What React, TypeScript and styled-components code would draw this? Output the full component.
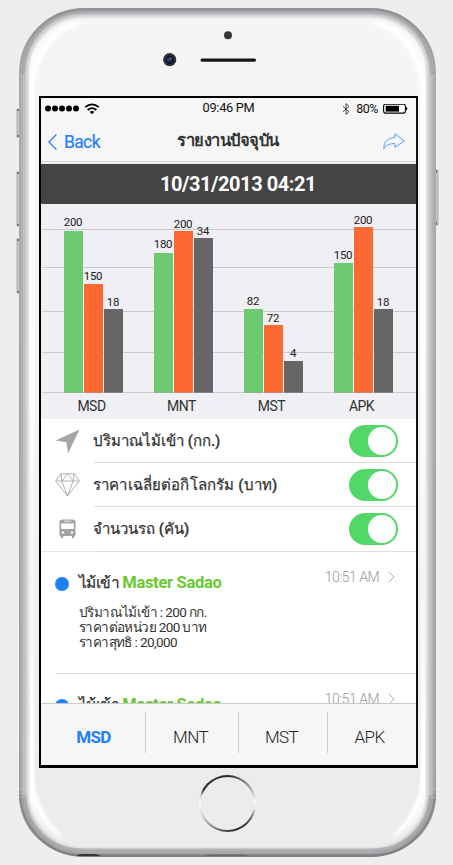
import React from "react";
import styled, { createGlobalStyle } from "styled-components";

const GlobalStyle = createGlobalStyle`
  * { box-sizing: border-box; }
  body { margin: 0; background: #eeeeee; font-family: Roboto, "Noto Sans", sans-serif; color: #333; }
`;

const Stage = styled.main`
  width: 453px;
  height: 865px;
  padding: 8px 17px 8px 19px;
  background: #eeeeee;
  overflow: hidden;
`;

const Phone = styled.div`
  position: relative;
  width: 417px;
  height: 849px;
  border-radius: 65px;
  background: linear-gradient(#f5f5f5 0%, #f5f5f5 35%, #eaedec 88%, #eaedec 100%);
  display: flex;
  flex-direction: column;
  align-items: center;
`;

const Shell = styled.svg`
  position: absolute;
  left: -3px;
  top: 0;
`;

const Earpiece = styled.header`
  position: relative;
  height: 88px;
  width: 100%;
`;

const Screen = styled.section`
  position: relative;
  width: 379px;
  height: 672px;
  margin-left: 3px;
  margin-right: 1px;
  border: solid #000;
  border-width: 2px 2px 3px 2px;
  border-right-color: #111;
  background: #fff;
  display: flex;
  flex-direction: column;
  overflow: hidden;
`;

const StatusBar = styled.div`
  height: 21px;
  flex: none;
  padding: 0 8px 0 4px;
  display: grid;
  grid-template-columns: 1fr auto 1fr;
  align-items: center;
  background: #f6f6f6;
  color: #111;
  font-size: 12px;
  line-height: 21px;
`;

const Cluster = styled.div<{ $end?: boolean }>`
  display: flex;
  align-items: center;
  justify-content: ${(p) => (p.$end ? "flex-end" : "flex-start")};
`;

const Clock = styled.time`
  margin: -3px 0 0 4px;
  font-size: 12.8px;
  letter-spacing: -0.3px;
`;

const Percent = styled.span`
  margin: 0 5px 0 6px;
  font-size: 12.5px;
  letter-spacing: -0.5px;
`;

const NavBar = styled.nav`
  height: 43px;
  flex: none;
  padding: 0 11px 0 7px;
  display: grid;
  grid-template-columns: 1fr auto 1fr;
  align-items: center;
  background: #f6f6f6;
  border-bottom: 1px solid #d5d5da;
`;

const BackButton = styled.button`
  display: flex;
  align-items: center;
  gap: 7px;
  padding: 4px 0 0;
  border: 0;
  background: none;
  color: #2581f8;
  font: 400 17.5px/22px Roboto, sans-serif;
  letter-spacing: -0.65px;
  -webkit-text-stroke: 0.2px currentColor;
`;

const Title = styled.h1`
  margin: 2px 0 0 3px;
  font-size: 16.5px;
  line-height: 24px;
  font-weight: 700;
  letter-spacing: -0.45px;
`;

const ShareButton = styled.button`
  justify-self: end;
  padding: 2px 0 0;
  border: 0;
  background: none;
  line-height: 0;
`;

const DateBanner = styled.div`
  height: 42px;
  flex: none;
  border-top: 2px solid #efeff4;
  background: #444;
  color: #fff;
  text-align: center;
  font-size: 20px;
  line-height: 41px;
  font-weight: 700;
  letter-spacing: -0.45px;
  padding-left: 19px;
`;

const Chart = styled.figure`
  margin: 0;
  height: 215px;
  flex: none;
  background:
    linear-gradient(#cbcbcf, #cbcbcf) 0 25px / 100% 1px no-repeat,
    linear-gradient(#cbcbcf, #cbcbcf) 0 63px / 100% 1px no-repeat,
    linear-gradient(#cbcbcf, #cbcbcf) 0 107px / 100% 1px no-repeat,
    linear-gradient(#cbcbcf, #cbcbcf) 0 148px / 100% 1px no-repeat,
    linear-gradient(#cbcbcf, #cbcbcf) 0 188px / 100% 1px no-repeat,
    #efeff4;
  padding-left: 23px;
  display: flex;
  gap: 31px;
`;

const Group = styled.div`
  width: 59px;
  flex: none;
`;

const Bars = styled.div`
  height: 189px;
  display: flex;
  align-items: flex-end;
  gap: 1px;
`;

const Column = styled.div`
  width: 19px;
  display: flex;
  flex-direction: column;
  align-items: center;
`;

const Value = styled.span<{ $lift: number }>`
  font-size: 11.5px;
  line-height: 13px;
  letter-spacing: -0.25px;
  color: #222;
  white-space: nowrap;
  padding-right: 1px;
  margin-bottom: ${(p) => p.$lift}px;
`;

const Bar = styled.div<{ $h: number; $color: string }>`
  width: 19px;
  height: ${(p) => p.$h}px;
  background: ${(p) => p.$color};
  border-bottom: 1px solid rgba(160, 160, 160, 0.5);
`;

const GroupName = styled.figcaption`
  text-align: center;
  font-size: 14px;
  letter-spacing: -0.5px;
  line-height: 26px;
  padding-right: 4px;
`;

const SettingRow = styled.label<{ $last?: boolean }>`
  height: ${(p) => (p.$last ? 45 : 44)}px;
  flex: none;
  display: flex;
  border-bottom: ${(p) => (p.$last ? "1px solid #e6e7ee" : "0")};
`;

const IconCell = styled.span`
  width: 53px;
  height: 44px;
  flex: none;
  display: flex;
  align-items: center;
  justify-content: center;
`;

const SettingBody = styled.span<{ $last?: boolean }>`
  flex: 1;
  height: ${(p) => (p.$last ? 45 : 44)}px;
  border-bottom: 1px solid #dedede;
  padding-right: 18px;
  display: flex;
  align-items: center;
  justify-content: space-between;
`;

const SettingText = styled.span<{ $track: number }>`
  font-size: 15px;
  font-weight: 500;
  line-height: 22px;
  margin-left: -1px;
  white-space: nowrap;
  letter-spacing: ${(p) => p.$track}px;
  -webkit-text-stroke: 0.25px currentColor;
`;

const Toggle = styled.span`
  width: 49px;
  height: 32px;
  border-radius: 16px;
  background: #53d769;
  padding: 2px;
  display: flex;
  justify-content: flex-end;
`;

const Knob = styled.span`
  width: 28px;
  height: 28px;
  border-radius: 50%;
  background: #fff;
`;

const Feed = styled.div`
  flex: 1;
  min-height: 0;
  overflow: hidden;
`;

const Entry = styled.article`
  height: 122px;
  margin-left: 14px;
  border-bottom: 1px solid #dedede;
  display: grid;
  grid-template-columns: 24px 1fr auto;
  align-content: start;
  padding: 19px 21px 0 0;
`;

const Dot = styled.i`
  width: 14px;
  height: 14px;
  border-radius: 50%;
  background: #1c80f8;
  margin-top: 6px;
`;

const EntryTitle = styled.h2`
  margin: 0;
  font-size: 15.5px;
  line-height: 24px;
  font-weight: 500;
  letter-spacing: -0.6px;
  -webkit-text-stroke: 0.25px currentColor;
`;

const Name = styled.b`
  color: #69c931;
  font-size: 16.5px;
  font-weight: 700;
  letter-spacing: -0.3px;
  -webkit-text-stroke: 0;
`;

const Stamp = styled.time`
  display: flex;
  align-items: center;
  gap: 9px;
  height: 14px;
  margin-top: -1px;
  color: #999;
  font-size: 14px;
  font-weight: 300;
  letter-spacing: -0.5px;
`;

const Details = styled.p`
  grid-column: 2 / 4;
  margin: 10px 0 0;
  font-size: 13.5px;
  line-height: 15px;
  font-weight: 400;
  letter-spacing: -0.6px;
`;

const TabBar = styled.nav`
  height: 62px;
  flex: none;
  border-top: 1px solid #c9c9c9;
  background: #f6f6f6;
  display: grid;
  grid-template-columns: 105px 93px 89px 88px;
  padding-top: 8px;
`;

const Tab = styled.button<{ $active?: boolean }>`
  height: 41px;
  padding: ${(p) => (p.$active ? "8px 0 0 1px" : "8px 3px 0 0")};
  border: 0;
  border-right: 1px solid #ccc;
  background: none;
  color: ${(p) => (p.$active ? "#2180fa" : "#222")};
  font: ${(p) => (p.$active ? 700 : 300)} 17px/24px Roboto, sans-serif;
  letter-spacing: -0.6px;
  &:last-child { border-right: 0; padding-right: 5px; }
`;

const HomeRing = styled.div`
  position: relative;
  width: 57px;
  height: 57px;
  margin: 7px 0 0 0;
  border-radius: 50%;
  padding: 2px;
  background: conic-gradient(#252526 0deg, #777 35deg, #aaa 60deg, #f9f9f9 85deg, #e9e9e9 100deg, #666 120deg, #222 155deg, #555 190deg, #999 220deg, #ddd 250deg, #fff 270deg, #ccc 287deg, #262626 300deg, #333 335deg, #222 360deg);
`;

const HomeFace = styled.div`
  width: 53px;
  height: 53px;
  border-radius: 50%;
  background: #ebeded;
`;

function PhoneShell() {
  return (
    <Shell width="423" height="849" viewBox="16 8 423 849">
      <defs>
        <linearGradient id="shineTop" x1="0" y1="0" x2="0" y2="1">
          <stop offset="0" stopColor="#fff" stopOpacity="0" />
          <stop offset=".08" stopColor="#fff" stopOpacity=".9" />
          <stop offset=".45" stopColor="#fff" stopOpacity=".8" />
          <stop offset=".68" stopColor="#fff" stopOpacity=".3" />
          <stop offset=".86" stopColor="#fff" stopOpacity=".9" />
          <stop offset=".93" stopColor="#fff" />
          <stop offset="1" stopColor="#fff" stopOpacity="0" />
        </linearGradient>
        <linearGradient id="rim" x1="0" y1="0" x2="0" y2="1">
          <stop offset="0" stopColor="#919295" />
          <stop offset=".08" stopColor="#a9abad" />
          <stop offset=".9" stopColor="#a0a2a4" />
          <stop offset="1" stopColor="#808285" />
        </linearGradient>
        <filter id="soft" x="-20%" y="-20%" width="140%" height="140%"><feGaussianBlur stdDeviation="1.4" /></filter>
      </defs>
      <g fill="#c5c7c9" stroke="#9a9c9e" strokeWidth=".7">
        <rect x="17" y="109" width="3" height="28" />
        <rect x="17" y="172" width="3" height="54" />
        <rect x="17" y="239" width="3" height="54" />
        <rect x="435.5" y="170" width="2.5" height="55" />
      </g>
      <g fill="#77797b">
        <rect x="17" y="109" width="2" height="2" /><rect x="17" y="135" width="2" height="2" />
        <rect x="17" y="172" width="2" height="2" /><rect x="17" y="224" width="2" height="2" />
        <rect x="17" y="239" width="2" height="2" /><rect x="17" y="291" width="2" height="2" />
        <rect x="435" y="170" width="2" height="3" /><rect x="435" y="222" width="2" height="3" />
      </g>
      <g fill="none">
        <rect x="32" y="21" width="391" height="823" rx="52" stroke="url(#shineTop)" strokeWidth="5" />
        <g fill="url(#shineTop)" filter="url(#soft)">
          <path d="M31 92C31 50 49 28 76 21L84 23C58 32 38 50 34 92Z" fill="#fff" />
          <path d="M424 92C424 50 406 28 379 21L371 23C397 32 417 50 421 92Z" fill="#fff" />
          <path d="M31 778C32 812 46 830 65 838C51 825 36 805 34 778Z" fill="#fff" />
          <path d="M424 778C423 812 409 830 390 838C404 825 419 805 421 778Z" fill="#fff" />
        </g>
        <rect x="27.8" y="16.8" width="399.4" height="831.4" rx="56" stroke="#e2e4e4" strokeWidth="3" />
        <rect x="26.5" y="15.5" width="402" height="834" rx="57.5" stroke="#cfd1d3" strokeWidth="2" />
        <rect x="24.5" y="13.5" width="406" height="838" rx="59.5" stroke="#bdbfc1" strokeWidth="2.4" />
        <rect x="22.3" y="11.3" width="410.4" height="842.4" rx="61.7" stroke="#b1b3b5" strokeWidth="2.4" />
        <rect x="20.2" y="9.2" width="414.6" height="846.6" rx="63.8" stroke="url(#rim)" strokeWidth="2.4" />
        <path d="M20 795C21 830 48 855 84 855H371C407 855 434 830 435 795" stroke="#7f8184" strokeWidth="2.5" opacity=".65" />
        <path d="M24 795C25 827 49 851 84 851H371C406 851 430 827 431 795" stroke="#8e9093" strokeWidth="5" opacity=".45" />
        <path d="M22.5 75C25 36 49 11.5 84 11.5H371C406 11.5 430 36 432.5 75" stroke="#8e9093" strokeWidth="4" opacity=".35" />
      </g>
      <path d="M19 75h7M429 75h7M19 789h7M429 789h7M19 797h7M429 797h7" stroke="#c5c7c9" opacity=".6" />
      <path d="M76 856q2-2 6-2h12q4 0 7 2z" fill="#353638" />
      <path d="M205 856l4-1.5h35l5 1.5z" fill="#68696b" />
    </Shell>
  );
}

function SpeakerArt() {
  return (
    <svg width="417" height="88" viewBox="19 8 417 88">
      <circle cx="228" cy="35.3" r="4" fill="#343536" />
      <circle cx="169.7" cy="59.7" r="6.6" fill="#303236" />
      <circle cx="169.7" cy="59.7" r="4.2" fill="#12151c" />
      <circle cx="169.3" cy="59.5" r="2.5" fill="#263b78" />
      <circle cx="171" cy="58.6" r=".8" fill="#6a79ab" />
      <rect x="200.5" y="58.5" width="55.5" height="3.2" rx="1.6" fill="#161616" />
    </svg>
  );
}

function Signal() {
  return (
    <svg width="55" height="14" viewBox="0 0 55 14">
      {[3, 10, 17, 24, 31].map((x) => <circle key={x} cx={x} cy="6.4" r="3" fill="#000" />)}
      <g fill="none" stroke="#000" strokeWidth="1.7">
        <path d="M40.2 5.2Q47-.6 53.8 5.2" />
        <path d="M42.6 8Q47 4.3 51.4 8" />
      </g>
      <path d="M44.5 9.8Q47 8 49.5 9.8L47 12.3Z" fill="#000" />
    </svg>
  );
}

function Bluetooth() {
  return (
    <svg width="8" height="12" viewBox="0 0 8 12" fill="none" stroke="#333" strokeWidth=".9">
      <path d="M.8 3.2L7 8.6L4 11.4V.6L7 3.4L.8 8.8" />
    </svg>
  );
}

function Battery() {
  return (
    <svg width="25" height="10" viewBox="0 0 25 10">
      <rect x=".6" y=".3" width="21.8" height="8.8" rx="2" fill="#fff" stroke="#000" strokeWidth="1.1" />
      <rect x="2.7" y="1.8" width="13.3" height="5.8" fill="#000" />
      <path d="M23.3 3.1Q25 4.7 23.3 6.3Z" fill="#000" stroke="#000" strokeWidth=".6" />
    </svg>
  );
}

const Plane = () => (
  <svg width="25" height="25" viewBox="0 0 25 25"><path d="M24.5.5L13 24.5L11.5 13.3L.5 11.5Z" fill="#a5a5a5" /></svg>
);

const Diamond = () => (
  <svg width="25" height="24" viewBox="0 0 25 24" fill="none" stroke="#a8a8a8" strokeWidth=".9" strokeLinejoin="round">
    <path d="M6 .8H19L24.4 8L12.5 23L.6 8ZM.6 8H24.4M6 .8L6.8 8L12.5 23L18.2 8L19 .8M6.8 8L12.5 .8L18.2 8" />
  </svg>
);

const Bus = () => (
  <svg width="17" height="20" viewBox="0 0 17 20">
    <path fillRule="evenodd" fill="#a3a3a3" d="M2.8.5H14.2Q16.5.5 16.5 3V16.2Q16.5 17 15.3 17V18.3Q15.2 19.3 14 19.3T12.8 18.3V17H4.2V18.3Q4.2 19.3 3 19.3T1.7 18.3V17Q.5 17 .5 16.2V3Q.5.5 2.8.5ZM4.8 1.8V2.6H12.2V1.8ZM2.2 4.5V10H14.8V4.5ZM4 12.2A1.3 1.3 0 1 0 4 14.8A1.3 1.3 0 0 0 4 12.2ZM13 12.2A1.3 1.3 0 1 0 13 14.8A1.3 1.3 0 0 0 13 12.2Z" />
  </svg>
);

const GREEN = "#6eca72";
const ORANGE = "#fc6932";
const GRAY = "#666666";

const groups = [
  { name: "MSD", bars: [[200, 162, 2], [150, 109, 1], [18, 84, 0]] },
  { name: "MNT", bars: [[180, 140, 2], [200, 162, 0], [34, 155, 0]] },
  { name: "MST", bars: [[82, 84, 1], [72, 68, 0], [4, 32, 1]] },
  { name: "APK", bars: [[150, 130, 1], [200, 166, 0], [18, 84, 0]] },
];

const settings = [
  { text: "ปริมาณไม้เข้า (กก.)", icon: <Plane />, track: 0 },
  { text: "ราคาเฉลี่ยต่อกิโลกรัม (บาท)", icon: <Diamond />, track: 0.15 },
  { text: "จำนวนรถ (คัน)", icon: <Bus />, track: 0 },
];

function FeedEntry() {
  return (
    <Entry>
      <Dot />
      <EntryTitle>ไม้เข้า <Name>Master Sadao</Name></EntryTitle>
      <Stamp>
        10:51 AM
        <svg width="7" height="12" viewBox="0 0 7 12" fill="none" stroke="#a8a8a8"><path d="M.7.7L6 6L.7 11.3" /></svg>
      </Stamp>
      <Details>
        ปริมาณไม้เข้า : 200 กก.<br />
        ราคาต่อหน่วย 200 บาท<br />
        ราคาสุทธิ : 20,000
      </Details>
    </Entry>
  );
}

export default function App() {
  return (
    <>
      <GlobalStyle />
      <Stage>
        <Phone>
          <PhoneShell />
          <Earpiece><SpeakerArt /></Earpiece>
          <Screen>
            <StatusBar>
              <Cluster><Signal /></Cluster>
              <Clock>09:46 PM</Clock>
              <Cluster $end><Bluetooth /><Percent>80%</Percent><Battery /></Cluster>
            </StatusBar>
            <NavBar>
              <BackButton>
                <svg width="9" height="16" viewBox="0 0 9 16" fill="none" stroke="#2581f8" strokeWidth="1.3"><path d="M8.4.5L.8 8L8.4 15.5" /></svg>
                Back
              </BackButton>
              <Title>รายงานปัจจุบัน</Title>
              <ShareButton aria-label="Share">
                <svg width="22" height="17" viewBox="0 0 22 17" fill="none" stroke="#3c9af2" strokeWidth=".9"><path d="M12 .8L21.3 8L12 14.3V10.7C6.5 10.5 3 11.8.8 15.8C.5 9 5 4.8 12 4.5Z" /></svg>
              </ShareButton>
            </NavBar>
            <DateBanner>10/31/2013 04:21</DateBanner>
            <Chart>
              {groups.map((g) => (
                <Group key={g.name}>
                  <Bars>
                    {g.bars.map(([value, height, lift], i) => (
                      <Column key={i}>
                        <Value $lift={lift}>{value}</Value>
                        <Bar $h={height} $color={[GREEN, ORANGE, GRAY][i]} />
                      </Column>
                    ))}
                  </Bars>
                  <GroupName>{g.name}</GroupName>
                </Group>
              ))}
            </Chart>
            {settings.map((s, i) => (
              <SettingRow key={s.text} $last={i === 2}>
                <IconCell>{s.icon}</IconCell>
                <SettingBody $last={i === 2}>
                  <SettingText $track={s.track}>{s.text}</SettingText>
                  <Toggle><Knob /></Toggle>
                </SettingBody>
              </SettingRow>
            ))}
            <Feed><FeedEntry /><FeedEntry /></Feed>
            <TabBar>
              <Tab $active>MSD</Tab>
              <Tab>MNT</Tab>
              <Tab>MST</Tab>
              <Tab>APK</Tab>
            </TabBar>
          </Screen>
          <HomeRing><HomeFace /></HomeRing>
        </Phone>
      </Stage>
    </>
  );
}
